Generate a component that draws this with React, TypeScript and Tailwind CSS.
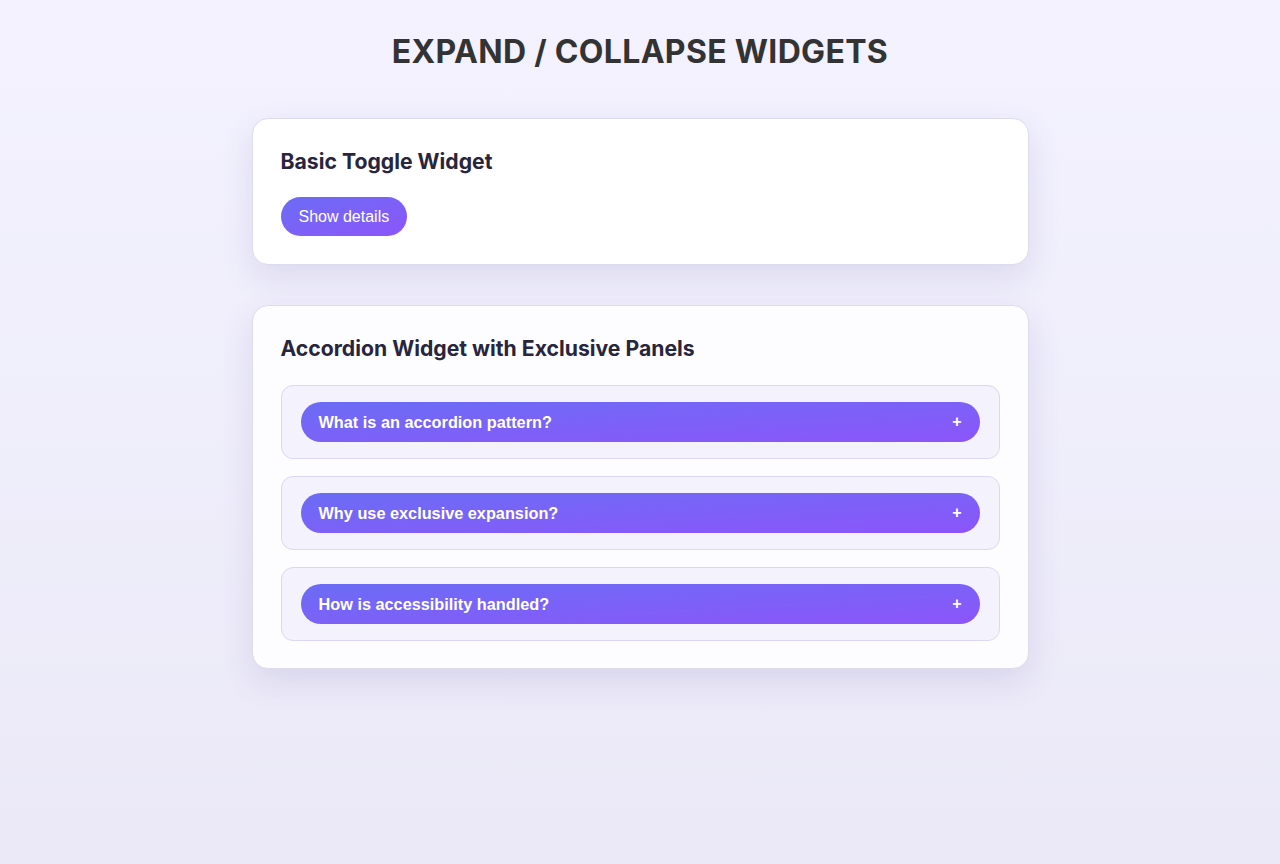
import React, { useState } from 'react';

const items = [
  { q: 'What is an accordion pattern?', a: 'An accordion stacks headers that reveal or hide their related content.' },
  { q: 'Why use exclusive expansion?', a: 'Only one panel is open at a time, keeping the page short and focused.' },
  { q: 'How is accessibility handled?', a: 'Headers are buttons with aria-expanded and aria-controls attributes.' },
];

export default function App() {
  const [showDetails, setShowDetails] = useState(false);
  const [open, setOpen] = useState<number | null>(null);

  return (
    <div className="min-h-screen w-full bg-gradient-to-b from-[#f3f2fe] to-[#ebe9f7] px-4 pt-[33px] pb-16 font-['Inter',sans-serif]">
      <h1 className="text-center text-[32px] leading-[38px] font-bold tracking-[0.01em] text-[#333333]">
        EXPAND / COLLAPSE WIDGETS
      </h1>

      <div className="mx-auto mt-[47px] flex w-[777px] flex-col gap-[40px]">
        <section className="rounded-2xl border border-[#dedbee] bg-white px-[28px] pt-[29px] pb-[28px] shadow-[0_12px_32px_rgba(90,80,160,0.14)]">
          <h2 className="text-[21.2px] leading-[26px] font-bold text-[#28253d]">Basic Toggle Widget</h2>
          <button
            onClick={() => setShowDetails(!showDetails)}
            className="mt-[23px] h-[39px] rounded-full bg-gradient-to-br from-[#6a6cf5] to-[#8c54fa] px-[18px] text-[16px] text-white font-['Liberation_Sans',Arial,sans-serif]"
          >
            {showDetails ? 'Hide details' : 'Show details'}
          </button>
          {showDetails && (
            <p className="mt-4 text-[15px] text-[#4b4866]">Here are the extra details revealed by the toggle.</p>
          )}
        </section>

        <section className="rounded-2xl border border-[#dedbee] bg-[#fdfdff] px-[28px] pt-[29px] pb-[27px] shadow-[0_12px_32px_rgba(90,80,160,0.14)]">
          <h2 className="text-[21.2px] leading-[26px] font-bold text-[#28253d]">Accordion Widget with Exclusive Panels</h2>
          <div className="mt-[24px] flex flex-col gap-[17px]">
            {items.map((it, i) => (
              <div key={it.q} className="rounded-xl border border-[#dcd7f6] bg-[#f3f2fd] px-[19px] py-[16px]">
                <button
                  aria-expanded={open === i}
                  onClick={() => setOpen(open === i ? null : i)}
                  className="flex h-[40px] w-full items-center justify-between rounded-full bg-gradient-to-br from-[#6a6cf5] to-[#8c54fa] pl-[18px] pr-[18px] text-left text-[16.3px] font-bold text-white font-['Liberation_Sans',Arial,sans-serif]"
                >
                  <span>{it.q}</span>
                  <span className="text-[16px] leading-none font-bold">{open === i ? '−' : '+'}</span>
                </button>
                {open === i && <p className="mt-3 px-2 text-[15px] text-[#4b4866]">{it.a}</p>}
              </div>
            ))}
          </div>
        </section>
      </div>
    </div>
  );
}
